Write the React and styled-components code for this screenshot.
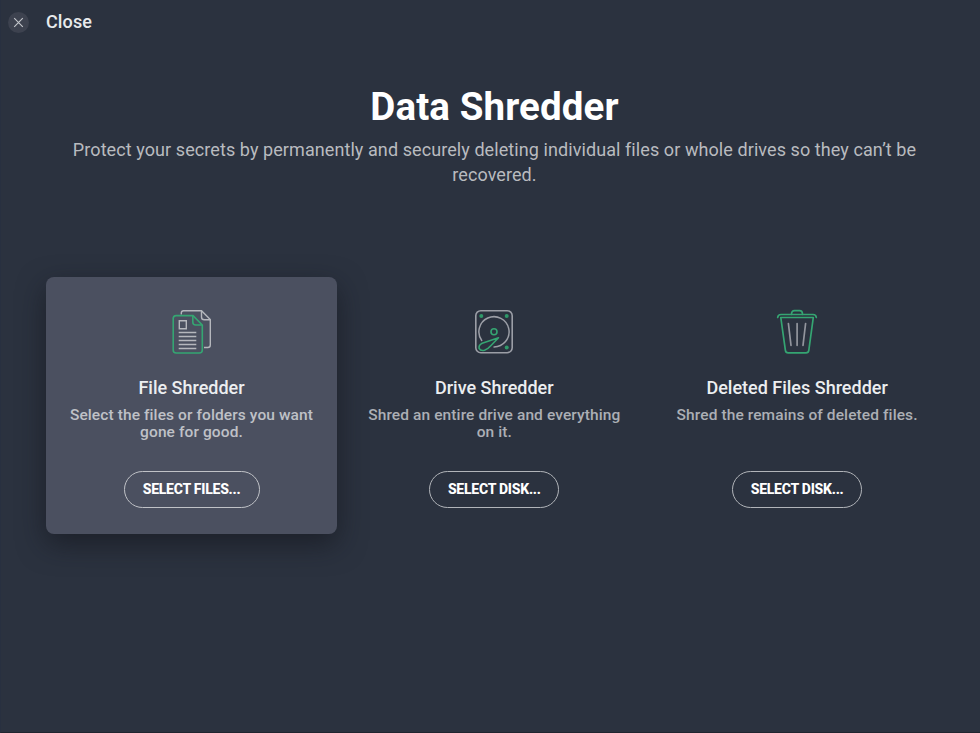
import React from "react";
import styled, { createGlobalStyle } from "styled-components";

const GlobalStyle = createGlobalStyle`
  * {
    box-sizing: border-box;
  }
  body {
    margin: 0;
    background: #2b323f;
    font-family: Roboto, "Liberation Sans", sans-serif;
  }
`;

const Window = styled.div`
  height: 733px;
  overflow: hidden;
  background: #2b323f;
  border-left: 1px solid #283040;
  border-bottom: 1px solid #20252f;
`;

const TopBar = styled.header`
  display: flex;
  align-items: center;
  gap: 17px;
  height: 44px;
  padding-left: 7px;
`;

const CloseButton = styled.button`
  display: flex;
  align-items: center;
  justify-content: center;
  width: 21px;
  height: 21px;
  padding: 0;
  border: none;
  border-radius: 50%;
  background: #3d424f;
  color: #c4c7cc;
`;

const CloseLabel = styled.span`
  color: #e8eaec;
  font-size: 18px;
  font-weight: 500;
  line-height: 22px;
  letter-spacing: 0.12px;
`;

const Heading = styled.div`
  padding: 40px 37px 0 45px;
  text-align: center;

  h1 {
    margin: 0;
    color: #fff;
    font-size: 38.5px;
    font-weight: 700;
    line-height: 46px;
    letter-spacing: 0.12px;
  }

  p {
    margin: 7px 0 0;
    color: #b9bbbf;
    font-size: 18px;
    line-height: 25px;
    letter-spacing: 0.08px;
  }
`;

const Cards = styled.main`
  display: grid;
  grid-template-columns: repeat(3, 291px);
  column-gap: 11.8px;
  padding: 90px 0 0 45px;
`;

const Card = styled.section`
  display: flex;
  flex-direction: column;
  align-items: center;
  height: 257px;
  padding: 31px 18px 0;
  border-radius: 8px;
  text-align: center;
  background: ${(props) => (props.$active ? "#4b5060" : "transparent")};
  box-shadow: ${(props) =>
    props.$active ? "0 10px 28px rgba(18, 20, 26, 0.6)" : "none"};

  svg {
    display: block;
  }

  h2 {
    margin: 21px 0 0;
    color: #eceef0;
    font-size: 18px;
    font-weight: 500;
    line-height: 22px;
  }

  p {
    height: 34px;
    margin: 8px 0 0;
    color: ${(props) => (props.$active ? "#bfc1c7" : "#acafb5")};
    font-size: 15.5px;
    font-weight: 500;
    line-height: 17px;
    letter-spacing: 0.1px;
  }
`;

const SelectButton = styled.button`
  width: ${(props) => props.$width}px;
  height: 37px;
  margin-top: 30px;
  padding: 0 0 1px;
  border: 1.5px solid ${(props) => (props.$active ? "#c0c2c7" : "#b1b4b9")};
  border-radius: 19px;
  background: transparent;
  color: #fff;
  font-family: inherit;
  font-size: 14px;
  font-weight: 800;
  letter-spacing: -0.24px;
`;

function FilesIcon() {
  return (
    <svg width="48" height="48" viewBox="0 0 48 48" fill="none">
      <g stroke="#b5b7bd" strokeWidth="1.4">
        <path d="M13.3 6.5V5q0-2.3 2.3-2.3H33.5L42.3 11.5V37q0 2.5-2.5 2.5H36" />
        <path d="M33.5 2.7V9q0 2.8 2.8 2.8H42" />
      </g>
      <g stroke="#35a572" strokeWidth="1.6">
        <path d="M8.2 7.6H25L34.3 17V42q0 3-3 3H8.2q-3 0-3-3V10.6q0-3 3-3z" />
        <path d="M24.8 8V14q0 3 3 3H34" />
      </g>
      <g stroke="#b5b7bd" strokeWidth="1.4">
        <path d="M11.3 12.7h7v8h-7zM10.7 24.5H28.3M10.7 28.5H28.3M10.7 32.5H28.3M10.7 36.5H28.3M10.7 40.5H28.3" />
      </g>
    </svg>
  );
}

function DriveIcon() {
  return (
    <svg width="48" height="48" viewBox="0 0 48 48" fill="none">
      <rect
        x="5.8"
        y="2.7"
        width="36.4"
        height="42"
        rx="5"
        stroke="#9b9ea6"
        strokeWidth="1.6"
      />
      <path
        d="M12 33A15.1 15.1 0 1 1 23.5 38.9"
        stroke="#9b9ea6"
        strokeWidth="1.5"
      />
      <g fill="#2f9869">
        <circle cx="11.3" cy="8" r="2" />
        <circle cx="36.7" cy="8" r="2" />
        <circle cx="36.7" cy="39.4" r="2" />
      </g>
      <circle cx="24" cy="23.7" r="3" stroke="#35a572" strokeWidth="1.6" />
      <path
        d="M28.5 29.8L12.2 35.2Q8.5 37 9.1 40.3Q10.5 43.2 14.5 42.2Q18 41 21 37.5z"
        stroke="#35a572"
        strokeWidth="1.6"
        strokeLinejoin="round"
      />
    </svg>
  );
}

function TrashIcon() {
  return (
    <svg
      width="48"
      height="48"
      viewBox="0 0 48 48"
      fill="none"
      strokeLinecap="round"
    >
      <g stroke="#35a572" strokeWidth="1.7">
        <path d="M4.7 9.5Q5 6.5 8 6.5H40Q43 6.5 43.3 9.5" />
        <path d="M18.5 6.3Q18.5 2.7 21.5 2.7H26.5Q29.5 2.7 29.5 6.3" />
        <path
          d="M7.8 9.5H40.3L35.8 42.3Q35.4 44.8 33 44.8H15.2Q12.8 44.8 12.4 42.3z"
          strokeLinejoin="round"
        />
      </g>
      <path
        d="M15.4 15.5L18 37.3M24.1 15.5V37.3M32.6 15.5L30 37.3"
        stroke="#92959d"
        strokeWidth="1.7"
      />
    </svg>
  );
}

const shredders = [
  {
    title: "File Shredder",
    text: "Select the files or folders you want gone for good.",
    button: "SELECT FILES...",
    width: 136,
    icon: <FilesIcon />,
    active: true,
  },
  {
    title: "Drive Shredder",
    text: "Shred an entire drive and everything on it.",
    button: "SELECT DISK...",
    width: 130,
    icon: <DriveIcon />,
  },
  {
    title: "Deleted Files Shredder",
    text: "Shred the remains of deleted files.",
    button: "SELECT DISK...",
    width: 130,
    icon: <TrashIcon />,
  },
];

export default function App() {
  return (
    <>
      <GlobalStyle />
      <Window>
        <TopBar>
          <CloseButton aria-label="Close">
            <svg
              width="11"
              height="11"
              viewBox="0 0 11 11"
              stroke="currentColor"
              strokeWidth="1.1"
            >
              <path d="M1.2 1.2L9.8 9.8M9.8 1.2L1.2 9.8" />
            </svg>
          </CloseButton>
          <CloseLabel>Close</CloseLabel>
        </TopBar>
        <Heading>
          <h1>Data Shredder</h1>
          <p>
            Protect your secrets by permanently and securely deleting individual
            files or whole drives so they can’t be recovered.
          </p>
        </Heading>
        <Cards>
          {shredders.map((item) => (
            <Card key={item.title} $active={item.active}>
              {item.icon}
              <h2>{item.title}</h2>
              <p>{item.text}</p>
              <SelectButton $width={item.width} $active={item.active}>
                {item.button}
              </SelectButton>
            </Card>
          ))}
        </Cards>
      </Window>
    </>
  );
}
